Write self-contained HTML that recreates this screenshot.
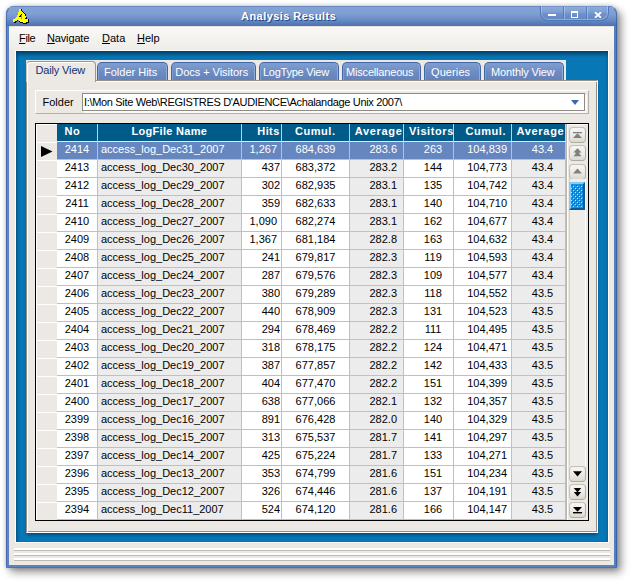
<!DOCTYPE html><html><head><meta charset="utf-8"><title>Analysis Results</title><style>
html,body{margin:0;padding:0;background:#fff;}
body{width:631px;height:582px;overflow:hidden;position:relative;font-family:"Liberation Sans",sans-serif;font-size:11px;}
.win{position:absolute;left:6px;top:6px;width:611px;height:562px;background:linear-gradient(90deg,#6a8fcb 0,#5b82be 2px,#5b82be 608px,#4e77b8 611px);border-radius:8px 8px 1px 1px;box-shadow:4px 4px 9px rgba(0,0,0,.45), 0 0 4px rgba(0,0,0,.2);}
.title{position:absolute;left:0;top:0;width:611px;height:20px;border-radius:8px 8px 0 0;background:linear-gradient(#4a70b0 0,#84a2d5 1px,#7f9ed2 8px,#6d8fc8 13px,#5479b6 18px,#4c71ae 20px);}
.ico{position:absolute;left:6px;top:2px;}
.ttext{position:absolute;left:235px;width:200px;top:3px;text-align:left;color:#fff;font-weight:bold;font-size:11px;line-height:14px;text-shadow:1px 1px 0 #27477e;letter-spacing:0.45px;}
.tbtns{position:absolute;left:534px;top:0;width:69px;height:15px;border:1px solid #4f78b8;border-top:none;border-radius:0 0 8px 8px;background:linear-gradient(#5d80bb 0,#8dabdb 1px,#7f9fd4 6px,#6d90c9 8px,#6488c3 14px);box-sizing:border-box;box-shadow:inset -1px -1px 0 rgba(255,255,255,.28), inset 1px 0 0 rgba(255,255,255,.28);}
.tbtns .d1,.tbtns .d2{position:absolute;top:1px;width:1px;height:12px;background:#557cba;box-shadow:1px 0 0 rgba(255,255,255,.3);}
.tbtns .d1{left:22px}.tbtns .d2{left:45px}
.gmin{position:absolute;left:7px;top:8px;width:8px;height:2px;background:#fff;}
.gmax{position:absolute;left:30px;top:5px;width:7px;height:7px;box-sizing:border-box;border:1px solid #fff;border-top-width:2px;}
.gx{position:absolute;left:53px;top:6px;}
.body{position:absolute;left:3px;top:20px;width:605px;height:539px;background:#ece9e4;}
.menu{position:absolute;left:0;top:0;width:605px;height:24px;background:linear-gradient(#d6cfca 0,#f8f7f5 1px,#f8f7f5 3px,#efede9);}
.menu span{position:absolute;top:5px;line-height:14px;color:#000;}
.blue{position:absolute;left:6px;top:24px;width:592px;height:491px;border:1px solid #fff;border-top-color:#f8f8f6;background:#0877b5;box-shadow:inset 0 4px 4px -1px #003d69, inset 3px 0 3px -2px #035a8e;}
/* coordinates inside .blue: page - (16,51) */
.tabstrip{position:absolute;left:10px;top:9px;width:540px;height:20px;background:#ece9e4;}
.tab{position:absolute;top:11px;height:18px;box-sizing:border-box;border:1px solid #4267a3;border-bottom:none;border-radius:5px 5px 0 0;background:linear-gradient(#7f9ed1,#6c8bc3 55%,#6483bb);color:#fff;text-align:center;line-height:18px;box-shadow:inset -1px 0 0 #8fabd8, inset 1px 1px 0 #7d9dd2;}
.tab.act{top:10px;height:21px;background:#ece9e4;color:#10306f;border-color:#9a978c;border-left-color:#c9c6bd;box-shadow:inset 1px 1px 0 #fff;line-height:17px;z-index:3;border-radius:4px 4px 0 0;}
.page{position:absolute;left:10px;top:29px;width:572px;height:453px;background:#ece9e4;box-sizing:border-box;border:1px solid #948f87;border-right-color:#fff;border-bottom-color:#fff;box-shadow:inset 1px 1px 0 #fff, inset -1px -1px 0 #948f87, 0 3px 3px -1px rgba(0,30,70,.5);}
/* inside .page content box: page coords - (27,81) */
.fold{position:absolute;left:8px;top:9px;width:554px;height:24px;box-sizing:border-box;border:1px solid #fff;border-right-color:#b3b0a8;border-bottom-color:#b3b0a8;}
.flab{position:absolute;left:6.5px;top:5px;line-height:13px;}
.combo{position:absolute;left:46px;top:2px;width:503px;height:18px;box-sizing:border-box;background:#fff;border:1px solid #8e8b84;box-shadow:2px 2px 0 #fbfaf8;}
.combo span{position:absolute;left:2px;top:2px;line-height:13px;white-space:pre;}
.carr{position:absolute;right:5px;top:6px;}
.grid{position:absolute;left:8px;top:42px;width:554px;height:398px;box-sizing:border-box;border:1px solid #000;background:#f3f2ef;overflow:hidden;}
/* inside grid: page - (36,124) */
.ind{position:absolute;left:0;top:0;width:21px;height:18px;background:#ece9e4;box-sizing:border-box;border-left:1px solid #fff;border-top:1px solid #fff;}
.ind.hd{height:18px;}
.arr{position:absolute;left:4px;top:3px;}
.hc{position:absolute;top:0;height:17px;background:#015b88;color:#fff;font-weight:bold;line-height:14px;border-right:1px solid #c4ced8;border-bottom:1px solid #ebe8e4;text-align:left;white-space:nowrap;}
.hc span{position:absolute;top:0;}
.row{position:absolute;left:0;height:18px;width:530px;}
.c{position:absolute;top:0;height:17px;background:#fff;line-height:15px;border-right:1px solid #c0c0c0;border-bottom:1px solid #c0c0c0;text-align:center;white-space:nowrap;}
.c-lf,.c-av1,.c-av2{background:#ececec;}
.c-lf{text-align:left;}
.c-lf span{padding-left:3px;}
.c-hits,.c-av1,.c-cu2{text-align:right;}
.c-hits span,.c-cu2 span{padding-right:4px;}
.c-av1 span{padding-right:6px;}
.sel .c{background:#6686c0;color:#fff;}
.sp{position:absolute;left:530px;top:0;width:22px;height:396px;background:#ece9e4;border-left:1px solid #b8b5ae;box-sizing:border-box;box-shadow:inset 1px 1px 0 #fff;}
.sb{position:absolute;left:2px;width:17px;height:16px;box-sizing:border-box;border:1px solid #c4c0b5;border-right-color:#b4b0a5;border-bottom-color:#aeaa9f;border-radius:4px;background:linear-gradient(#f7f6f3,#ebe8e2 60%,#dcd9d1);}
.sb svg{position:absolute;left:0;top:0;}
.track{position:absolute;left:2px;top:55px;width:17px;height:287px;background:#efede9;border-left:1px solid #d4d1c9;border-right:1px solid #fff;box-sizing:border-box;}
.thumb{position:absolute;left:2px;top:58px;width:16px;height:28px;box-sizing:border-box;border:2px solid;border-color:#86cbf6 #0b5b96 #0b5b96 #86cbf6;background-color:#1a92e0;}
.thumb svg{position:absolute;left:0;top:0;}
.status{position:absolute;left:5px;top:521px;width:596px;height:16px;}
.status i{display:block;height:2px;background:#fff;border-bottom:1px solid #bdbab2;margin-top:1px;margin-bottom:2px;}

.c-vis span{padding-left:9px;}
.c-av2 span{padding-left:8px;}
.combo span{letter-spacing:-0.33px;left:1px;}
.tab{text-align:left;}
.tab span{position:absolute;top:0;white-space:nowrap;}
.win::after{content:'';position:absolute;left:0;top:0;right:0;bottom:0;border:1px solid rgba(45,85,155,.6);border-top-color:transparent;border-bottom-color:rgba(45,85,155,.3);border-radius:8px 8px 1px 1px;}

</style></head><body>
<div class="win">
<div class="title"><svg class="ico" width="17" height="17" viewBox="0 0 17 17" shape-rendering="crispEdges"><rect x="7" y="1" width="2" height="1" fill="#ffff00"/><rect x="9" y="1" width="1" height="1" fill="#000"/><rect x="7" y="2" width="2" height="1" fill="#ffff00"/><rect x="9" y="2" width="1" height="1" fill="#000"/><rect x="7" y="3" width="3" height="1" fill="#ffff00"/><rect x="10" y="3" width="1" height="1" fill="#000"/><rect x="6" y="4" width="5" height="1" fill="#ffff00"/><rect x="11" y="4" width="1" height="1" fill="#000"/><rect x="6" y="5" width="6" height="1" fill="#ffff00"/><rect x="12" y="5" width="1" height="1" fill="#000"/><rect x="6" y="6" width="3" height="1" fill="#ffff00"/><rect x="10" y="6" width="3" height="1" fill="#ffff00"/><rect x="9" y="6" width="1" height="1" fill="#000"/><rect x="13" y="6" width="1" height="1" fill="#000"/><rect x="5" y="7" width="3" height="1" fill="#ffff00"/><rect x="10" y="7" width="3" height="1" fill="#ffff00"/><rect x="8" y="7" width="1" height="1" fill="#000"/><rect x="13" y="7" width="1" height="1" fill="#000"/><rect x="5" y="8" width="2" height="1" fill="#ffff00"/><rect x="10" y="8" width="4" height="1" fill="#ffff00"/><rect x="7" y="8" width="2" height="1" fill="#000"/><rect x="4" y="9" width="5" height="1" fill="#ffff00"/><rect x="10" y="9" width="4" height="1" fill="#ffff00"/><rect x="14" y="9" width="1" height="1" fill="#000"/><rect x="3" y="10" width="6" height="1" fill="#ffff00"/><rect x="10" y="10" width="3" height="1" fill="#ffff00"/><rect x="13" y="10" width="2" height="1" fill="#000"/><rect x="1" y="11" width="15" height="1" fill="#ffff00"/><rect x="16" y="11" width="1" height="1" fill="#000"/><rect x="1" y="12" width="4" height="1" fill="#ffff00"/><rect x="7" y="12" width="9" height="1" fill="#ffff00"/><rect x="5" y="12" width="1" height="1" fill="#000"/><rect x="16" y="12" width="1" height="1" fill="#000"/><rect x="1" y="13" width="2" height="1" fill="#ffff00"/><rect x="8" y="13" width="8" height="1" fill="#ffff00"/><rect x="3" y="13" width="2" height="1" fill="#000"/><rect x="7" y="13" width="1" height="1" fill="#000"/><rect x="16" y="13" width="1" height="1" fill="#000"/><rect x="11" y="14" width="3" height="1" fill="#ffff00"/><rect x="2" y="14" width="2" height="1" fill="#000"/><rect x="8" y="14" width="3" height="1" fill="#000"/><rect x="14" y="14" width="3" height="1" fill="#000"/><rect x="11" y="15" width="4" height="1" fill="#000"/></svg>
<span class="ttext">Analysis Results</span>
<div class="tbtns"><i class="d1"></i><i class="d2"></i><i class="gmin"></i><i class="gmax"></i><svg class="gx" width="8" height="6" viewBox="0 0 8 6"><path d="M1 0.3 L7 5.7 M7 0.3 L1 5.7" stroke="#fff" stroke-width="1.8" fill="none"/></svg></div>
</div>
<div class="body">
<div class="menu"><span style="left:10px;letter-spacing:-0.35px"><u>F</u>ile</span><span style="left:38px;letter-spacing:-0.15px"><u>N</u>avigate</span><span style="left:93px"><u>D</u>ata</span><span style="left:128px"><u>H</u>elp</span></div>
<div class="blue">
<div class="tabstrip"></div>
<div class="tab act" style="left:10px;width:70px"><span style="left:8.5px;letter-spacing:-0.15px">Daily View</span></div>
<div class="tab" style="left:81px;width:71px"><span style="left:6.0px;letter-spacing:0.00px">Folder Hits</span></div>
<div class="tab" style="left:155px;width:85px"><span style="left:3.3px;letter-spacing:-0.04px">Docs + Visitors</span></div>
<div class="tab" style="left:243px;width:80px"><span style="left:3.0px;letter-spacing:-0.25px">LogType View</span></div>
<div class="tab" style="left:326px;width:79px"><span style="left:3.0px;letter-spacing:-0.18px">Miscellaneous</span></div>
<div class="tab" style="left:408px;width:57px"><span style="left:6.0px;letter-spacing:0.10px">Queries</span></div>
<div class="tab" style="left:468px;width:80px"><span style="left:6.0px;letter-spacing:-0.13px">Monthly View</span></div>
<div class="page">
<div class="fold"><span class="flab">Folder</span><div class="combo"><span>I:\Mon Site Web\REGISTRES D'AUDIENCE\Achalandage Unix 2007\</span><svg class="carr" width="8" height="5" viewBox="0 0 8 5"><path d="M0 0 H8 L4 5 Z" fill="#386ca6"/></svg></div></div>
<div class="grid">
<div class="ind hd"></div>
<div class="hc h-no" style="left:21px;width:40px"><span style="left:7.5px;letter-spacing:0.50px">No</span></div>
<div class="hc h-lf" style="left:62px;width:143px"><span style="left:33.5px;letter-spacing:0.30px">LogFile Name</span></div>
<div class="hc h-hits" style="left:206px;width:39px"><span style="left:15.3px;letter-spacing:0.40px">Hits</span></div>
<div class="hc h-cu1" style="left:246px;width:67px"><span style="left:13.0px;letter-spacing:0.55px">Cumul.</span></div>
<div class="hc h-av1" style="left:314px;width:53px"><span style="left:4.7px;letter-spacing:0.70px">Average</span></div>
<div class="hc h-vis" style="left:368px;width:49px"><span style="left:5.0px;letter-spacing:0.60px">Visitors</span></div>
<div class="hc h-cu2" style="left:418px;width:57px"><span style="left:11.5px;letter-spacing:0.55px">Cumul.</span></div>
<div class="hc h-av2" style="left:476px;width:53px"><span style="left:4.5px;letter-spacing:0.70px">Average</span></div>
<div class="row sel" style="top:18px">
<div class="ind"><svg width="12" height="11" viewBox="0 0 12 11" class="arr"><path d="M0 0 L11.5 5.5 L0 11 Z" fill="#000"/></svg></div>
<div class="c c-no" style="left:21px;width:40px"><span>2414</span></div>
<div class="c c-lf" style="left:62px;width:143px"><span>access_log_Dec31_2007</span></div>
<div class="c c-hits" style="left:206px;width:39px"><span>1,267</span></div>
<div class="c c-cu1" style="left:246px;width:67px"><span>684,639</span></div>
<div class="c c-av1" style="left:314px;width:53px"><span>283.6</span></div>
<div class="c c-vis" style="left:368px;width:49px"><span>263</span></div>
<div class="c c-cu2" style="left:418px;width:57px"><span>104,839</span></div>
<div class="c c-av2" style="left:476px;width:53px"><span>43.4</span></div>
</div>
<div class="row" style="top:36px">
<div class="ind"></div>
<div class="c c-no" style="left:21px;width:40px"><span>2413</span></div>
<div class="c c-lf" style="left:62px;width:143px"><span>access_log_Dec30_2007</span></div>
<div class="c c-hits" style="left:206px;width:39px"><span style="padding-right:1px">437</span></div>
<div class="c c-cu1" style="left:246px;width:67px"><span>683,372</span></div>
<div class="c c-av1" style="left:314px;width:53px"><span>283.2</span></div>
<div class="c c-vis" style="left:368px;width:49px"><span>144</span></div>
<div class="c c-cu2" style="left:418px;width:57px"><span>104,773</span></div>
<div class="c c-av2" style="left:476px;width:53px"><span>43.4</span></div>
</div>
<div class="row" style="top:54px">
<div class="ind"></div>
<div class="c c-no" style="left:21px;width:40px"><span>2412</span></div>
<div class="c c-lf" style="left:62px;width:143px"><span>access_log_Dec29_2007</span></div>
<div class="c c-hits" style="left:206px;width:39px"><span style="padding-right:1px">302</span></div>
<div class="c c-cu1" style="left:246px;width:67px"><span>682,935</span></div>
<div class="c c-av1" style="left:314px;width:53px"><span>283.1</span></div>
<div class="c c-vis" style="left:368px;width:49px"><span>135</span></div>
<div class="c c-cu2" style="left:418px;width:57px"><span>104,742</span></div>
<div class="c c-av2" style="left:476px;width:53px"><span>43.4</span></div>
</div>
<div class="row" style="top:72px">
<div class="ind"></div>
<div class="c c-no" style="left:21px;width:40px"><span>2411</span></div>
<div class="c c-lf" style="left:62px;width:143px"><span>access_log_Dec28_2007</span></div>
<div class="c c-hits" style="left:206px;width:39px"><span style="padding-right:1px">359</span></div>
<div class="c c-cu1" style="left:246px;width:67px"><span>682,633</span></div>
<div class="c c-av1" style="left:314px;width:53px"><span>283.1</span></div>
<div class="c c-vis" style="left:368px;width:49px"><span>140</span></div>
<div class="c c-cu2" style="left:418px;width:57px"><span>104,710</span></div>
<div class="c c-av2" style="left:476px;width:53px"><span>43.4</span></div>
</div>
<div class="row" style="top:90px">
<div class="ind"></div>
<div class="c c-no" style="left:21px;width:40px"><span>2410</span></div>
<div class="c c-lf" style="left:62px;width:143px"><span>access_log_Dec27_2007</span></div>
<div class="c c-hits" style="left:206px;width:39px"><span>1,090</span></div>
<div class="c c-cu1" style="left:246px;width:67px"><span>682,274</span></div>
<div class="c c-av1" style="left:314px;width:53px"><span>283.1</span></div>
<div class="c c-vis" style="left:368px;width:49px"><span>162</span></div>
<div class="c c-cu2" style="left:418px;width:57px"><span>104,677</span></div>
<div class="c c-av2" style="left:476px;width:53px"><span>43.4</span></div>
</div>
<div class="row" style="top:108px">
<div class="ind"></div>
<div class="c c-no" style="left:21px;width:40px"><span>2409</span></div>
<div class="c c-lf" style="left:62px;width:143px"><span>access_log_Dec26_2007</span></div>
<div class="c c-hits" style="left:206px;width:39px"><span>1,367</span></div>
<div class="c c-cu1" style="left:246px;width:67px"><span>681,184</span></div>
<div class="c c-av1" style="left:314px;width:53px"><span>282.8</span></div>
<div class="c c-vis" style="left:368px;width:49px"><span>163</span></div>
<div class="c c-cu2" style="left:418px;width:57px"><span>104,632</span></div>
<div class="c c-av2" style="left:476px;width:53px"><span>43.4</span></div>
</div>
<div class="row" style="top:126px">
<div class="ind"></div>
<div class="c c-no" style="left:21px;width:40px"><span>2408</span></div>
<div class="c c-lf" style="left:62px;width:143px"><span>access_log_Dec25_2007</span></div>
<div class="c c-hits" style="left:206px;width:39px"><span style="padding-right:1px">241</span></div>
<div class="c c-cu1" style="left:246px;width:67px"><span>679,817</span></div>
<div class="c c-av1" style="left:314px;width:53px"><span>282.3</span></div>
<div class="c c-vis" style="left:368px;width:49px"><span>119</span></div>
<div class="c c-cu2" style="left:418px;width:57px"><span>104,593</span></div>
<div class="c c-av2" style="left:476px;width:53px"><span>43.4</span></div>
</div>
<div class="row" style="top:144px">
<div class="ind"></div>
<div class="c c-no" style="left:21px;width:40px"><span>2407</span></div>
<div class="c c-lf" style="left:62px;width:143px"><span>access_log_Dec24_2007</span></div>
<div class="c c-hits" style="left:206px;width:39px"><span style="padding-right:1px">287</span></div>
<div class="c c-cu1" style="left:246px;width:67px"><span>679,576</span></div>
<div class="c c-av1" style="left:314px;width:53px"><span>282.3</span></div>
<div class="c c-vis" style="left:368px;width:49px"><span>109</span></div>
<div class="c c-cu2" style="left:418px;width:57px"><span>104,577</span></div>
<div class="c c-av2" style="left:476px;width:53px"><span>43.4</span></div>
</div>
<div class="row" style="top:162px">
<div class="ind"></div>
<div class="c c-no" style="left:21px;width:40px"><span>2406</span></div>
<div class="c c-lf" style="left:62px;width:143px"><span>access_log_Dec23_2007</span></div>
<div class="c c-hits" style="left:206px;width:39px"><span style="padding-right:1px">380</span></div>
<div class="c c-cu1" style="left:246px;width:67px"><span>679,289</span></div>
<div class="c c-av1" style="left:314px;width:53px"><span>282.3</span></div>
<div class="c c-vis" style="left:368px;width:49px"><span>118</span></div>
<div class="c c-cu2" style="left:418px;width:57px"><span>104,552</span></div>
<div class="c c-av2" style="left:476px;width:53px"><span>43.5</span></div>
</div>
<div class="row" style="top:180px">
<div class="ind"></div>
<div class="c c-no" style="left:21px;width:40px"><span>2405</span></div>
<div class="c c-lf" style="left:62px;width:143px"><span>access_log_Dec22_2007</span></div>
<div class="c c-hits" style="left:206px;width:39px"><span style="padding-right:1px">440</span></div>
<div class="c c-cu1" style="left:246px;width:67px"><span>678,909</span></div>
<div class="c c-av1" style="left:314px;width:53px"><span>282.3</span></div>
<div class="c c-vis" style="left:368px;width:49px"><span>131</span></div>
<div class="c c-cu2" style="left:418px;width:57px"><span>104,523</span></div>
<div class="c c-av2" style="left:476px;width:53px"><span>43.5</span></div>
</div>
<div class="row" style="top:198px">
<div class="ind"></div>
<div class="c c-no" style="left:21px;width:40px"><span>2404</span></div>
<div class="c c-lf" style="left:62px;width:143px"><span>access_log_Dec21_2007</span></div>
<div class="c c-hits" style="left:206px;width:39px"><span style="padding-right:1px">294</span></div>
<div class="c c-cu1" style="left:246px;width:67px"><span>678,469</span></div>
<div class="c c-av1" style="left:314px;width:53px"><span>282.2</span></div>
<div class="c c-vis" style="left:368px;width:49px"><span>111</span></div>
<div class="c c-cu2" style="left:418px;width:57px"><span>104,495</span></div>
<div class="c c-av2" style="left:476px;width:53px"><span>43.5</span></div>
</div>
<div class="row" style="top:216px">
<div class="ind"></div>
<div class="c c-no" style="left:21px;width:40px"><span>2403</span></div>
<div class="c c-lf" style="left:62px;width:143px"><span>access_log_Dec20_2007</span></div>
<div class="c c-hits" style="left:206px;width:39px"><span style="padding-right:1px">318</span></div>
<div class="c c-cu1" style="left:246px;width:67px"><span>678,175</span></div>
<div class="c c-av1" style="left:314px;width:53px"><span>282.2</span></div>
<div class="c c-vis" style="left:368px;width:49px"><span>124</span></div>
<div class="c c-cu2" style="left:418px;width:57px"><span>104,471</span></div>
<div class="c c-av2" style="left:476px;width:53px"><span>43.5</span></div>
</div>
<div class="row" style="top:234px">
<div class="ind"></div>
<div class="c c-no" style="left:21px;width:40px"><span>2402</span></div>
<div class="c c-lf" style="left:62px;width:143px"><span>access_log_Dec19_2007</span></div>
<div class="c c-hits" style="left:206px;width:39px"><span style="padding-right:1px">387</span></div>
<div class="c c-cu1" style="left:246px;width:67px"><span>677,857</span></div>
<div class="c c-av1" style="left:314px;width:53px"><span>282.2</span></div>
<div class="c c-vis" style="left:368px;width:49px"><span>142</span></div>
<div class="c c-cu2" style="left:418px;width:57px"><span>104,433</span></div>
<div class="c c-av2" style="left:476px;width:53px"><span>43.5</span></div>
</div>
<div class="row" style="top:252px">
<div class="ind"></div>
<div class="c c-no" style="left:21px;width:40px"><span>2401</span></div>
<div class="c c-lf" style="left:62px;width:143px"><span>access_log_Dec18_2007</span></div>
<div class="c c-hits" style="left:206px;width:39px"><span style="padding-right:1px">404</span></div>
<div class="c c-cu1" style="left:246px;width:67px"><span>677,470</span></div>
<div class="c c-av1" style="left:314px;width:53px"><span>282.2</span></div>
<div class="c c-vis" style="left:368px;width:49px"><span>151</span></div>
<div class="c c-cu2" style="left:418px;width:57px"><span>104,399</span></div>
<div class="c c-av2" style="left:476px;width:53px"><span>43.5</span></div>
</div>
<div class="row" style="top:270px">
<div class="ind"></div>
<div class="c c-no" style="left:21px;width:40px"><span>2400</span></div>
<div class="c c-lf" style="left:62px;width:143px"><span>access_log_Dec17_2007</span></div>
<div class="c c-hits" style="left:206px;width:39px"><span style="padding-right:1px">638</span></div>
<div class="c c-cu1" style="left:246px;width:67px"><span>677,066</span></div>
<div class="c c-av1" style="left:314px;width:53px"><span>282.1</span></div>
<div class="c c-vis" style="left:368px;width:49px"><span>132</span></div>
<div class="c c-cu2" style="left:418px;width:57px"><span>104,357</span></div>
<div class="c c-av2" style="left:476px;width:53px"><span>43.5</span></div>
</div>
<div class="row" style="top:288px">
<div class="ind"></div>
<div class="c c-no" style="left:21px;width:40px"><span>2399</span></div>
<div class="c c-lf" style="left:62px;width:143px"><span>access_log_Dec16_2007</span></div>
<div class="c c-hits" style="left:206px;width:39px"><span style="padding-right:1px">891</span></div>
<div class="c c-cu1" style="left:246px;width:67px"><span>676,428</span></div>
<div class="c c-av1" style="left:314px;width:53px"><span>282.0</span></div>
<div class="c c-vis" style="left:368px;width:49px"><span>140</span></div>
<div class="c c-cu2" style="left:418px;width:57px"><span>104,329</span></div>
<div class="c c-av2" style="left:476px;width:53px"><span>43.5</span></div>
</div>
<div class="row" style="top:306px">
<div class="ind"></div>
<div class="c c-no" style="left:21px;width:40px"><span>2398</span></div>
<div class="c c-lf" style="left:62px;width:143px"><span>access_log_Dec15_2007</span></div>
<div class="c c-hits" style="left:206px;width:39px"><span style="padding-right:1px">313</span></div>
<div class="c c-cu1" style="left:246px;width:67px"><span>675,537</span></div>
<div class="c c-av1" style="left:314px;width:53px"><span>281.7</span></div>
<div class="c c-vis" style="left:368px;width:49px"><span>141</span></div>
<div class="c c-cu2" style="left:418px;width:57px"><span>104,297</span></div>
<div class="c c-av2" style="left:476px;width:53px"><span>43.5</span></div>
</div>
<div class="row" style="top:324px">
<div class="ind"></div>
<div class="c c-no" style="left:21px;width:40px"><span>2397</span></div>
<div class="c c-lf" style="left:62px;width:143px"><span>access_log_Dec14_2007</span></div>
<div class="c c-hits" style="left:206px;width:39px"><span style="padding-right:1px">425</span></div>
<div class="c c-cu1" style="left:246px;width:67px"><span>675,224</span></div>
<div class="c c-av1" style="left:314px;width:53px"><span>281.7</span></div>
<div class="c c-vis" style="left:368px;width:49px"><span>133</span></div>
<div class="c c-cu2" style="left:418px;width:57px"><span>104,271</span></div>
<div class="c c-av2" style="left:476px;width:53px"><span>43.5</span></div>
</div>
<div class="row" style="top:342px">
<div class="ind"></div>
<div class="c c-no" style="left:21px;width:40px"><span>2396</span></div>
<div class="c c-lf" style="left:62px;width:143px"><span>access_log_Dec13_2007</span></div>
<div class="c c-hits" style="left:206px;width:39px"><span style="padding-right:1px">353</span></div>
<div class="c c-cu1" style="left:246px;width:67px"><span>674,799</span></div>
<div class="c c-av1" style="left:314px;width:53px"><span>281.6</span></div>
<div class="c c-vis" style="left:368px;width:49px"><span>151</span></div>
<div class="c c-cu2" style="left:418px;width:57px"><span>104,234</span></div>
<div class="c c-av2" style="left:476px;width:53px"><span>43.5</span></div>
</div>
<div class="row" style="top:360px">
<div class="ind"></div>
<div class="c c-no" style="left:21px;width:40px"><span>2395</span></div>
<div class="c c-lf" style="left:62px;width:143px"><span>access_log_Dec12_2007</span></div>
<div class="c c-hits" style="left:206px;width:39px"><span style="padding-right:1px">326</span></div>
<div class="c c-cu1" style="left:246px;width:67px"><span>674,446</span></div>
<div class="c c-av1" style="left:314px;width:53px"><span>281.6</span></div>
<div class="c c-vis" style="left:368px;width:49px"><span>137</span></div>
<div class="c c-cu2" style="left:418px;width:57px"><span>104,191</span></div>
<div class="c c-av2" style="left:476px;width:53px"><span>43.5</span></div>
</div>
<div class="row" style="top:378px">
<div class="ind"></div>
<div class="c c-no" style="left:21px;width:40px"><span>2394</span></div>
<div class="c c-lf" style="left:62px;width:143px"><span>access_log_Dec11_2007</span></div>
<div class="c c-hits" style="left:206px;width:39px"><span style="padding-right:1px">524</span></div>
<div class="c c-cu1" style="left:246px;width:67px"><span>674,120</span></div>
<div class="c c-av1" style="left:314px;width:53px"><span>281.6</span></div>
<div class="c c-vis" style="left:368px;width:49px"><span>166</span></div>
<div class="c c-cu2" style="left:418px;width:57px"><span>104,147</span></div>
<div class="c c-av2" style="left:476px;width:53px"><span>43.5</span></div>
</div>
<div class="sp">
<div class="sb" style="top:3px"><svg width="15" height="14" viewBox="0 0 15 14"><rect x="3" y="4" width="9" height="1.3" fill="#808080"/><path d="M7.5 5.3 L12 10 H3 Z" fill="#808080"/></svg></div>
<div class="sb" style="top:21px"><svg width="15" height="14" viewBox="0 0 15 14"><path d="M7.5 2.2 L11.6 6.6 H3.4 Z" fill="#808080"/><path d="M7.5 5.8 L11.6 10.2 H3.4 Z" fill="#808080"/><rect x="5.6" y="6" width="3.8" height="2" fill="#808080"/></svg></div>
<div class="sb" style="top:40px"><svg width="15" height="14" viewBox="0 0 15 14"><path d="M7.5 3.4 L12 8.6 H3 Z" fill="#808080"/></svg></div>
<div class="track"></div>
<div class="thumb"><svg width="12" height="24" viewBox="0 0 12 24"><defs><pattern id="dp" width="4" height="4" patternUnits="userSpaceOnUse"><rect x="1" y="1" width="1" height="1" fill="#0a5f9e"/><rect x="3" y="3" width="1" height="1" fill="#0a5f9e"/><rect x="2" y="2" width="1" height="1" fill="#b9e4ff"/><rect x="0" y="0" width="1" height="1" fill="#b9e4ff"/></pattern></defs><rect x="0" y="1" width="12" height="22" fill="url(#dp)"/></svg></div>
<div class="sb" style="top:342px"><svg width="15" height="14" viewBox="0 0 15 14"><path d="M7.5 9.4 L12 4.2 H3 Z" fill="#000"/></svg></div>
<div class="sb" style="top:360px"><svg width="15" height="14" viewBox="0 0 15 14"><path d="M7.5 7.4 L11.2 3 H3.8 Z" fill="#000"/><path d="M7.5 11.4 L11.2 7 H3.8 Z" fill="#000"/></svg></div>
<div class="sb" style="top:378px"><svg width="15" height="14" viewBox="0 0 15 14"><path d="M7.5 8.8 L12 4 H3 Z" fill="#000"/><rect x="3" y="9" width="9" height="1.4" fill="#000"/></svg></div>
</div>
</div>
</div>
</div>
<div class="status"><i></i><i></i><i></i></div>
</div></div></body></html>
